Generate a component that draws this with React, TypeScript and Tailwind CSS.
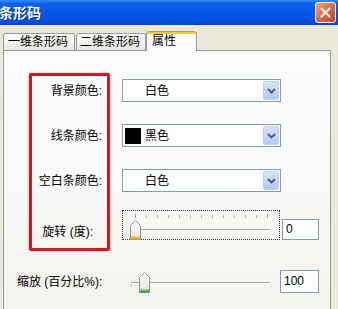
import React from 'react'

// XP风格的"条形码"设置对话框（属性页）

function Chevron() {
  return (
    <svg width="9" height="6" viewBox="0 0 9 6">
      <path d="M1 1 L4.5 4.5 L8 1" fill="none" stroke="#4d6185" strokeWidth="2" />
    </svg>
  )
}

function ColorSelect({ swatch, text }: { swatch: string; text: string }) {
  return (
    <div className="flex h-[23px] w-[159px] items-center border border-[#7f9db9] bg-white">
      <div className={`ml-[2px] h-[16px] w-[16px] ${swatch}`} />
      <span className="ml-[4px] flex-1 text-[12px] leading-none text-black">{text}</span>
      <div className="mr-[1px] flex h-[19px] w-[16px] items-center justify-center rounded-[2px] border border-[#bdd0f8] bg-gradient-to-b from-[#d6e3fd] to-[#b3c9f6]">
        <Chevron />
      </div>
    </div>
  )
}

function Thumb({ h, base, light }: { h: number; base: string; light: string }) {
  return (
    <svg width="11" height={h} viewBox={`0 0 11 ${h}`}>
      <defs>
        <linearGradient id={`g${base}`} x1="0" y1="0" x2="0" y2="1">
          <stop offset="0" stopColor="#ffffff" />
          <stop offset="1" stopColor="#e4e3dc" />
        </linearGradient>
      </defs>
      <path
        d={`M5.5 0.5 L10.5 5.5 V${h - 0.5} H0.5 V5.5 Z`}
        fill={`url(#g${base})`}
        stroke="#8c95a0"
      />
      <rect x="1" y={h - 4} width="9" height="1.5" fill={light} />
      <rect x="1" y={h - 2.5} width="9" height="2" fill={base} />
    </svg>
  )
}

function Row({ label, children }: { label: string; children: React.ReactNode }) {
  return (
    <div className="flex h-[23px] items-center">
      <div className="w-[98px] text-right text-[12px] leading-[16px] text-black">{label}</div>
      <div className="ml-[20px]">{children}</div>
    </div>
  )
}

const ticks = Array.from({ length: 13 }, (_, i) => i)

export default function App() {
  return (
    <div className="flex h-[309px] w-[338px] flex-col overflow-hidden bg-[#ece9d8] [font-family:'Liberation_Sans','Noto_Sans_CJK_SC',sans-serif]">
      {/* 标题栏 */}
      <div className="flex h-[25px] items-center justify-between bg-[linear-gradient(to_bottom,#3d8df7_0%,#0d62ec_14%,#0558e6_50%,#0552e0_80%,#0a43c8_100%)]">
        <span className="-ml-[1px] text-[14px] font-bold leading-none text-white [text-shadow:1px_1px_0_#0a2f8f]">
          条形码
        </span>
        <div className="mr-[2px] flex h-[21px] w-[21px] items-center justify-center rounded-[3px] border border-white bg-gradient-to-br from-[#f2a888] via-[#de6a42] to-[#c2401c]">
          <svg width="11" height="11" viewBox="0 0 11 11">
            <path d="M1.5 1.5 L9.5 9.5 M9.5 1.5 L1.5 9.5" stroke="#fff" strokeWidth="2" strokeLinecap="round" />
          </svg>
        </div>
      </div>

      {/* 选项卡 */}
      <div className="flex h-[25px] items-end pl-[3px] text-[12px] text-black">
        <div className="h-[17px] w-[72px] rounded-t-[3px] border border-b-0 border-[#919b9c] bg-gradient-to-b from-white to-[#e8e7e0] pl-[4px] leading-[16px]">
          一维条形码
        </div>
        <div className="ml-[1px] h-[17px] w-[70px] rounded-t-[3px] border border-b-0 border-[#919b9c] bg-gradient-to-b from-white to-[#e8e7e0] pl-[3px] leading-[16px]">
          二维条形码
        </div>
        <div className="relative z-10 -mb-px h-[20px] w-[51px] rounded-t-[3px] border-x border-[#919b9c] bg-[#fcfcfe]">
          <div className="h-[3px] rounded-t-[3px] border-t border-[#e68b2c] bg-[#ffc73c]" />
          <div className="pl-[5px] leading-[15px]">属性</div>
        </div>
      </div>

      {/* 面板 */}
      <div className="relative ml-[3px] w-[328px] flex-1 border border-b-0 border-[#919b9c] bg-gradient-to-b from-[#fcfcfe] via-[#fafaf9] to-[#f3f2ec] pt-[28px]">
        <Row label="背景颜色:">
          <ColorSelect swatch="bg-white" text="白色" />
        </Row>
        <div className="mt-[22px]">
          <Row label="线条颜色:">
            <ColorSelect swatch="bg-black" text="黑色" />
          </Row>
        </div>
        <div className="mt-[22px]">
          <Row label="空白条颜色:">
            <ColorSelect swatch="bg-white" text="白色" />
          </Row>
        </div>

        {/* 旋转 */}
        <div className="mt-[18px] flex h-[30px] items-end">
          <div className="w-[98px] pr-[9px] text-right text-[12px] leading-[16px] text-black">旋转 (度):</div>
          <div className="relative ml-[20px] h-[30px] w-[158px] border border-dotted border-[#333]">
            <div className="absolute left-[12px] top-[3px] flex w-[133px] items-start justify-between">
              {ticks.map((i) => (
                <div
                  key={i}
                  className={i === 0 || i === 12 ? 'h-[4px] w-px bg-[#9a9a9a]' : 'mt-[1px] h-[3px] w-px bg-[#a8a8a8]'}
                />
              ))}
            </div>
            <div className="absolute left-[12px] top-[18px] h-[2px] w-[135px] border-t border-[#a3a29d] bg-white" />
            <div className="absolute left-[7px] top-[9px]">
              <Thumb h={20} base="#e59d2c" light="#f7cf7a" />
            </div>
          </div>
          <div className="ml-[2px] h-[21px] w-[37px] border border-[#7f9db9] bg-white pl-[3px] text-[12px] leading-[19px] text-black">
            0
          </div>
        </div>

        {/* 缩放 */}
        <div className="mt-[30px] flex h-[23px] items-center">
          <div className="w-[118px] pl-[13px] text-[12px] leading-[16px] text-black">缩放 (百分比%):</div>
          <div className="relative h-[23px] w-[158px]">
            <div className="absolute left-[9px] top-[12px] h-[4px] w-px bg-[#a3a29d]" />
            <div className="absolute left-[9px] top-[12px] h-[2px] w-[138px] border-t border-[#a3a29d] bg-white" />
            <div className="absolute left-[17px] top-[2px]">
              <Thumb h={21} base="#3f9c3f" light="#8fd48f" />
            </div>
          </div>
          <div className="h-[23px] w-[39px] border border-[#7f9db9] bg-white pl-[3px] text-[12px] leading-[20px] text-black">
            100
          </div>
        </div>

        {/* 标注的红框 */}
        <div className="pointer-events-none absolute left-[25px] top-[22px] h-[178px] w-[81px] rounded-[2px] border-[3px] border-[#cc1a22] shadow-[0_0_2px_#e88]" />
      </div>
    </div>
  )
}
